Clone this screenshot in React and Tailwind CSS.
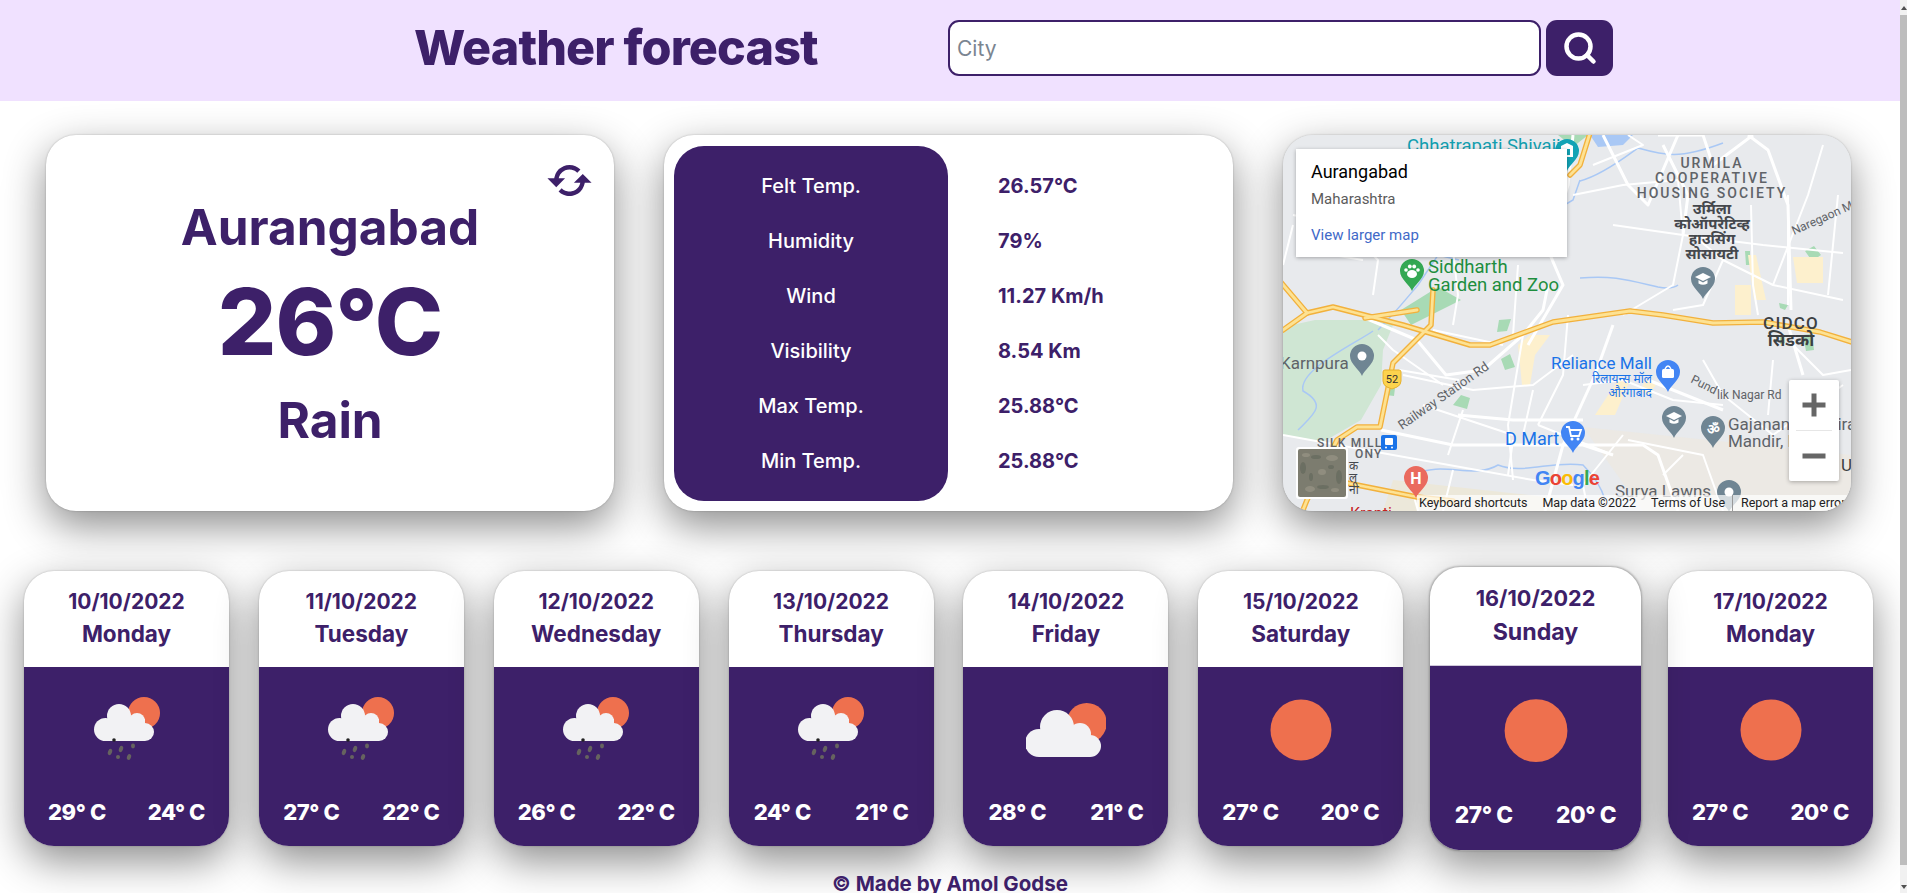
import React from "react";
import { Search } from "lucide-react";
import { BiRefresh } from "react-icons/bi";

const stats = [
  ["Felt Temp.", "26.57°C"],
  ["Humidity", "79%"],
  ["Wind", "11.27 Km/h"],
  ["Visibility", "8.54 Km"],
  ["Max Temp.", "25.88°C"],
  ["Min Temp.", "25.88°C"],
];

const days = [
  { date: "10/10/2022", day: "Monday", hi: 29, lo: 24, icon: "rain" },
  { date: "11/10/2022", day: "Tuesday", hi: 27, lo: 22, icon: "rain" },
  { date: "12/10/2022", day: "Wednesday", hi: 26, lo: 22, icon: "rain" },
  { date: "13/10/2022", day: "Thursday", hi: 24, lo: 21, icon: "rain" },
  { date: "14/10/2022", day: "Friday", hi: 28, lo: 21, icon: "cloud" },
  { date: "15/10/2022", day: "Saturday", hi: 27, lo: 20, icon: "sun" },
  { date: "16/10/2022", day: "Sunday", hi: 27, lo: 20, icon: "sun", big: true },
  { date: "17/10/2022", day: "Monday", hi: 27, lo: 20, icon: "sun" },
];

const WeatherIcon = ({ type }) => (
  <svg width="80" height="80" viewBox="0 0 80 80" className="block mx-auto">
    {type === "sun" && <circle cx="40" cy="41" r="30.5" fill="#ee704e" />}
    {type === "rain" && (
      <g>
        <circle cx="57" cy="24" r="16" fill="#ee704e" />
        <g fill="#f2f2f4">
          <circle cx="18.5" cy="40.5" r="11.5" />
          <circle cx="32" cy="27" r="12" />
          <circle cx="50" cy="32" r="8" />
          <circle cx="58" cy="43" r="9" />
          <rect x="18" y="30" width="40" height="22" />
        </g>
        <circle cx="27" cy="51" r="1.8" fill="#222" />
        <g fill="#66635f">
          <ellipse cx="23" cy="63" rx="2" ry="3.2" transform="rotate(20 23 63)" />
          <ellipse cx="34" cy="60" rx="2" ry="3.2" transform="rotate(20 34 60)" />
          <ellipse cx="46" cy="57" rx="2" ry="2.4" />
          <ellipse cx="31" cy="68" rx="2" ry="2" />
          <ellipse cx="42" cy="68" rx="2" ry="3" transform="rotate(20 42 68)" />
        </g>
      </g>
    )}
    {type === "cloud" && (
      <g>
        <circle cx="60.7" cy="34" r="20" fill="#ee704e" />
        <g fill="#f2f2f4">
          <circle cx="13" cy="54" r="14" />
          <circle cx="31" cy="38" r="17" />
          <circle cx="54" cy="45" r="11" />
          <circle cx="64" cy="57" r="11" />
          <rect x="13" y="44" width="51" height="24" />
        </g>
      </g>
    )}
  </svg>
);

const Pin = ({ x, y, color, children }) => (
  <g transform={`translate(${x} ${y})`}>
    <path d="M0 19C-2 13-12 7-12 -1a12 12 0 0 1 24 0C12 7 2 13 0 19Z" fill={color} />
    {children || <circle cx="0" cy="-1" r="4.5" fill="#fff" />}
  </g>
);

const Cap = () => (
  <g fill="#fff">
    <path d="M-8 -3L0 -7L8 -3L0 1Z" />
    <path d="M-4.5 0V3.5Q0 6 4.5 3.5V0L0 2.5Z" />
  </g>
);

const MapArt = () => (
  <svg viewBox="0 0 568 376" width="568" height="376" className="block" fontFamily="Roboto, sans-serif">
    <rect width="568" height="376" fill="#e8eaed" />
    {/* parks and built up patches */}
    <path d="M0 192L32 185L112 185L100 215L98 250L78 285L40 307L0 300Z" fill="#cfe6d3" />
    <path d="M118 175L155 152L178 165L128 190Z" fill="#a8dab5" />
    <path d="M300 292L568 320L568 376L360 376Z" fill="#ece9e1" opacity="0.8" />
    <path d="M110 345L290 365L300 376L100 376Z" fill="#ece8da" />
    <path d="M307 0L350 0L340 10L315 12Z" fill="#a9c8f5" />
    <path d="M275 0L305 0L290 12Z" fill="#a8dab5" />
    <path d="M170 270l8-10l9 3l-3 11zM218 224l9-5l5 13l-10 3zM216 185l12-1l-4 12l-10 1zM106 252l6 1l-1 8l-8-1z" fill="#a8dab5" />
    <path d="M520 200l9-1l2 16l-8 1zM497 200l4 0l1 8l-5 1zM462 116h5v14h-4zM522 116l9-5l7 9l-9 6zM496 168l9 2l-3 5l-5-2z" fill="#a8dab5" />
    <path d="M452 150h16v30h-16zM510 122h30v26h-26zM465 120l8 0l10 45l-12 0z" fill="#fdf0cd" />
    <path d="M235 210l12-10l20 0l-15 20l-5 30l-8 0zM335 245l12 0l-15 35l-20 0zM363 245l10 5l-8 10l-8-5z" fill="#fdf0cd" />
    {/* rivers */}
    <g fill="none" stroke="#a9c8f5" strokeWidth="1.5">
      <path d="M90 196C70 210 15 235 20 256C45 270 30 280 15 295" />
      <path d="M297 46C320 40 345 20 355 13C380 20 395 25 440 8M297 143C330 140 345 145 375 152C390 155 395 150 395 150" />
      <path d="M95 195C110 180 118 170 135 150L155 120L176 125" />
      <path d="M240 75L265 80L290 65L297 45M198 105L240 85" />
      <path d="M130 340C160 325 190 345 215 330C240 340 270 325 300 330C310 340 318 350 322 365" />
    </g>
    {/* minor roads */}
    <g fill="none" stroke="#fff" strokeWidth="2" strokeLinejoin="round">
      <path d="M310 30L360 10L345 0M330 90L400 100L480 110L560 118M290 60L340 50L395 45M395 45L400 100L390 150L340 180" />
      <path d="M410 100L440 125L490 150L560 165M468 70L470 150L475 180M440 125L420 170L390 175" />
      <path d="M540 10L525 60L490 150M505 60L505 170M555 60L545 160" />
      <path d="M10 80L60 90L95 125L90 160M60 90L50 120L80 125M170 115L175 160L170 190M235 130L230 200" />
      <path d="M150 195L220 210M120 240L190 255L250 250L290 220M140 270L230 300M180 275L165 320M230 305L225 340" />
      <path d="M250 255L240 300M240 200L225 290L230 345M285 180L280 240L255 290M255 290L330 320" />
      <path d="M0 300L110 320L250 345L290 350M125 340L135 376M170 335L160 376" />
      <path d="M420 225L440 260L490 300L560 250M490 225L485 280M505 205L540 240L568 235M340 300L300 350L305 376" />
      <path d="M345 305L420 320L440 376M400 320L380 340" />
      <path d="M95 200L110 215L160 250M116 235L176 245" />
      <path d="M300 250L340 245L390 265L440 270M0 130L10 90" />
    </g>
    {/* white main roads */}
    <g fill="none" stroke="#fff" strokeWidth="3" strokeLinejoin="round">
      <path d="M130 112L150 90L180 65L175 55M290 0L285 50L265 115L280 150L245 210M320 0L345 50L365 70L395 0" />
      <path d="M375 0L420 0L430 30L470 0M400 100L405 60L380 10M465 0L485 15L505 70L508 175" />
      <path d="M82 183L134 205L163 240L200 235L240 200L260 175L265 150" />
      <path d="M175 280L230 285L300 285" />
      <path d="M262 376L280 310L312 240L330 190" />
      <path d="M98 295L170 310L300 310L360 310L375 320L395 376M300 310L330 320" />
      <path d="M365 245L440 275" />
      <path d="M505 190L520 240" />
    </g>
    {/* highways */}
    <g fill="none" strokeLinejoin="round" strokeLinecap="round">
      <g stroke="#f2b13c" strokeWidth="5.5">
        <path d="M-4 145L24 178L50 172L120 190L187 210L207 210L270 187L347 176L380 180L430 188L480 187L537 197L572 208" />
        <path d="M150 155L148 190L110 228L104 258L97 292L74 292L54 305L24 365L18 380" />
        <path d="M24 178L0 195M134 175L82 183" />
        <path d="M64 348L134 362L170 366M307 -2L297 30L287 40" />
      </g>
      <g stroke="#fde293" strokeWidth="2.8">
        <path d="M-4 145L24 178L50 172L120 190L187 210L207 210L270 187L347 176L380 180L430 188L480 187L537 197L572 208" />
        <path d="M150 155L148 190L110 228L104 258L97 292L74 292L54 305L24 365L18 380" />
        <path d="M24 178L0 195M134 175L82 183" />
        <path d="M64 348L134 362L170 366M307 -2L297 30L287 40" />
      </g>
    </g>

    {/* labels */}
    <text x="124" y="17" fontSize="18.5" fill="#129eaf">Chhatrapati Shivaji</text>
    <Pin x={284} y={17} color="#12a3b5"><path d="M-6 -6L0 -9L6 -6V5H-6Z" fill="#fff" /><rect x="-3" y="-3" width="6" height="6" fill="#12a3b5" /></Pin>

    <text fontSize="18.5" fill="#1e8e3e">
      <tspan x="145" y="138">Siddharth</tspan>
      <tspan x="145" y="156">Garden and Zoo</tspan>
    </text>
    <Pin x={129} y={137} color="#34a853">
      <g fill="#fff">
        <ellipse cx="0" cy="2" rx="5" ry="4" />
        <circle cx="-6" cy="-2" r="1.8" />
        <circle cx="-2.2" cy="-5.5" r="1.9" />
        <circle cx="2.2" cy="-5.5" r="1.9" />
        <circle cx="6" cy="-2" r="1.8" />
      </g>
    </Pin>

    <g textAnchor="middle" fill="#5f6368" fontSize="14" fontWeight="500" letterSpacing="2">
      <text x="429" y="33">URMILA</text>
      <text x="429" y="48">COOPERATIVE</text>
      <text x="429" y="63">HOUSING SOCIETY</text>
    </g>
    <g textAnchor="middle" fill="#45484d" fontSize="15" fontWeight="700" fontFamily="'Noto Sans', 'Noto Sans Devanagari', sans-serif">
      <text x="429" y="79">उर्मिला</text>
      <text x="429" y="94">कोऑपरेटिव्ह</text>
      <text x="429" y="109">हाउसिंग</text>
      <text x="429" y="124">सोसायटी</text>
    </g>
    <Pin x={420} y={145} color="#6f8593"><Cap /></Pin>
    <text transform="translate(511 100) rotate(-24)" fontSize="12" fill="#5f6368">Naregaon M</text>

    <text x="508" y="194" textAnchor="middle" fontSize="17" fontWeight="500" letterSpacing="1.2" fill="#3c4043">CIDCO</text>
    <text x="508" y="211" textAnchor="middle" fontSize="17" fontWeight="700" fill="#3c4043" fontFamily="'Noto Sans', sans-serif">सिडको</text>

    <text x="-3" y="234" fontSize="17" fill="#5f6368">Karnpura</text>
    <Pin x={79} y={222} color="#6f8593" />
    <g>
      <path d="M102 235h14q2 0 2 2v9q0 4-4 6l-5 2l-5-2q-4-2-4-6v-9q0-2 2-2Z" fill="#fcd34d" stroke="#e6b12e" strokeWidth="1" />
      <text x="109" y="248" textAnchor="middle" fontSize="11" fill="#333">52</text>
    </g>
    <text transform="translate(119 295) rotate(-35)" fontSize="13" fill="#5f6368">Railway Station Rd</text>

    <text x="34" y="312" fontSize="12" fontWeight="500" letterSpacing="1.2" fill="#5f6368">SILK MILL</text>
    <text x="72" y="323" fontSize="12" fontWeight="500" letterSpacing="1.2" fill="#5f6368">ONY</text>
    <g fontSize="12" fill="#45484d" fontFamily="'Noto Sans', sans-serif">
      <text x="66" y="335">क</text>
      <text x="66" y="347">ल</text>
      <text x="66" y="359">नी</text>
    </g>
    <g>
      <rect x="98" y="300" width="16" height="15" rx="2" fill="#1a73e8" />
      <rect x="102" y="303" width="8" height="7" rx="1" fill="#fff" />
      <circle cx="103" cy="312.5" r="1" fill="#fff" />
      <circle cx="109" cy="312.5" r="1" fill="#fff" />
    </g>

    <text x="222" y="310" fontSize="18" fill="#1a73e8">D Mart</text>
    <Pin x={290} y={299} color="#4285f4">
      <path d="M-7 -7H-4L-2 2H6L8 -4H-3" fill="none" stroke="#fff" strokeWidth="1.8" />
      <circle cx="-1" cy="5" r="1.5" fill="#fff" />
      <circle cx="5" cy="5" r="1.5" fill="#fff" />
    </Pin>

    <text x="369" y="234" textAnchor="end" fontSize="17" fill="#1a73e8">Reliance Mall</text>
    <g textAnchor="end" fontSize="12" fill="#1a73e8" fontFamily="'Noto Sans', sans-serif">
      <text x="369" y="248">रिलायन्स मॉल</text>
      <text x="369" y="262">औरंगाबाद</text>
    </g>
    <Pin x={385} y={238} color="#4285f4">
      <rect x="-6" y="-4" width="12" height="9" rx="1.5" fill="#fff" />
      <path d="M-3 -4Q0 -10 3 -4" fill="none" stroke="#fff" strokeWidth="1.4" />
    </Pin>

    <text transform="translate(407 247) rotate(27)" fontSize="12" fill="#5f6368">Pund</text>
    <text x="434" y="264" fontSize="12" fill="#5f6368">lik Nagar Rd</text>
    <Pin x={391} y={284} color="#6f8593"><Cap /></Pin>
    <Pin x={430} y={294} color="#6f8593">
      <text x="0" y="5" textAnchor="middle" fontSize="14" fontWeight="700" fill="#fff" fontFamily="'DejaVu Sans', sans-serif">ॐ</text>
    </Pin>
    <text fontSize="17" fill="#5f6368">
      <tspan x="445" y="295">Gajanan Mandira</tspan>
      <tspan x="445" y="312">Mandir, Nagar</tspan>
    </text>
    <text x="558" y="336" fontSize="17" fill="#3c4043">U</text>

    <text x="332" y="362" fontSize="17" fill="#5f6368">Surya Lawns</text>
    <Pin x={446} y={358} color="#6f8593" />
    <Pin x={133} y={344} color="#ea6a5e">
      <text x="0" y="5" textAnchor="middle" fontSize="16" fontWeight="700" fill="#fff">H</text>
    </Pin>
    <text x="67" y="384" fontSize="16" fill="#c5221f">Kranti</text>

    <text x="252" y="350" fontSize="20" fontWeight="700" fontFamily="'Liberation Sans', sans-serif" letterSpacing="-0.8">
      <tspan fill="#4285f4">G</tspan>
      <tspan fill="#ea4335">o</tspan>
      <tspan fill="#fbbc05">o</tspan>
      <tspan fill="#4285f4">g</tspan>
      <tspan fill="#34a853">l</tspan>
      <tspan fill="#ea4335">e</tspan>
    </text>

    {/* satellite thumbnail */}
    <rect x="13" y="312" width="52" height="52" rx="3" fill="#fff" />
    <rect x="15" y="314" width="48" height="48" rx="2" fill="#7d7c6f" />
    <g fill="#5f6459" opacity="0.55">
      <ellipse cx="20" cy="333" rx="3" ry="6" />
      <ellipse cx="33" cy="322" rx="5" ry="2" />
      <ellipse cx="56" cy="342" rx="3" ry="7" />
      <ellipse cx="40" cy="352" rx="6" ry="2" />
      <ellipse cx="28" cy="342" rx="2" ry="4" />
      <ellipse cx="48" cy="332" rx="3" ry="2" />
    </g>
    <g fill="#a09c8c" opacity="0.55">
      <ellipse cx="49" cy="323" rx="6" ry="3" />
      <ellipse cx="27" cy="354" rx="5" ry="3" />
      <ellipse cx="39" cy="337" rx="4" ry="3" />
      <ellipse cx="23" cy="320" rx="4" ry="2" />
      <ellipse cx="52" cy="355" rx="4" ry="2" />
    </g>
  </svg>
);

const MapPanel = () => (
  <div className="relative w-[568px] h-[376px] rounded-[30px] overflow-hidden bg-[#e8eaed] shadow-[0_15px_42px_rgba(0,0,0,0.45),0_0_2px_rgba(0,0,0,0.25)]">
    <MapArt />
    <div className="absolute left-[13px] top-[14px] w-[271px] h-[108px] bg-white shadow-[0_1px_4px_rgba(0,0,0,0.3)] pl-[15px] pt-[12px] [font-family:Roboto,sans-serif]">
      <div className="text-[18px] leading-[22px] text-black">Aurangabad</div>
      <div className="mt-[6px] text-[15px] leading-[20px] text-[#5b5b5b]">Maharashtra</div>
      <div className="mt-[16px] text-[15px] leading-[20px] text-[#4169c8]">View larger map</div>
    </div>
    <div className="absolute left-[506px] top-[245px] w-[50px] h-[101px] bg-white rounded-[2px] shadow-[0_1px_4px_rgba(0,0,0,0.3)] flex flex-col items-center">
      <div className="h-[50px] w-full flex items-center justify-center">
        <svg width="24" height="24" viewBox="0 0 24 24"><path d="M0.5 12H23.5M12 0.5V23.5" stroke="#666" strokeWidth="5" /></svg>
      </div>
      <div className="w-[36px] h-px bg-[#e6e6e6]" />
      <div className="h-[50px] w-full flex items-center justify-center">
        <svg width="24" height="24" viewBox="0 0 24 24"><path d="M0.5 12H23.5" stroke="#666" strokeWidth="5" /></svg>
      </div>
    </div>
    <div className="absolute right-0 bottom-0 left-[134px] h-[16px] bg-white/70 flex items-center pl-[2px] text-[12.5px] leading-[16px] text-[#222] whitespace-nowrap [font-family:Roboto,sans-serif]">
      <span>Keyboard shortcuts</span>
      <span className="ml-[15px]">Map data ©2022</span>
      <span className="ml-[15px]">Terms of Use</span>
      <span className="ml-[7px] pl-[8px] border-l border-[#999]">Report a map error</span>
    </div>
  </div>
);

const DayCard = ({ d }) => (
  <div className={`w-[205px] h-[275px] shrink-0 rounded-[30px] overflow-hidden bg-white shadow-[0_15px_42px_rgba(0,0,0,0.45),0_0_2px_rgba(0,0,0,0.25)] ${d.big ? "relative scale-[1.03]" : ""}`}>
    <div className="h-[96px] pt-[15px] text-center leading-[32px] font-bold text-[#3d2069]">
      <div className="text-[21px]">{d.date}</div>
      <div className="text-[22.5px]">{d.day}</div>
    </div>
    <div className="h-[179px] bg-[#3d2069] pt-[22px]">
      <WeatherIcon type={d.icon} />
      <div className="mt-[28px] px-[3px] flex justify-around text-[22px] leading-[30px] font-extrabold tracking-[-0.4px] text-white">
        <span>{d.hi}° C</span>
        <span>{d.lo}° C</span>
      </div>
    </div>
  </div>
);

export default function App() {
  return (
    <div className="flex h-screen overflow-hidden bg-white [font-family:Inter,sans-serif]">
      <div className="flex-1 min-w-0 flex flex-col">
        <header className="relative z-10 h-[101px] shrink-0 bg-[#f0e1ff] flex items-center pl-[414px] pb-[5px]">
          <h1 className="w-[534px] text-[48.5px] font-extrabold text-[#3d2069] tracking-[-0.9px]">Weather forecast</h1>
          <input
            placeholder="City"
            className="w-[593px] h-[56px] rounded-[11px] border-2 border-[#3d2069] bg-white px-[7px] text-[21px] placeholder:text-[#7b8591] outline-none"
          />
          <button className="ml-[5px] w-[67px] h-[56px] rounded-[11px] bg-[#3d2069] flex items-center justify-center">
            <Search size={36} strokeWidth={3} color="#fff" />
          </button>
        </header>

        <section className="shrink-0 flex pt-[34px] pl-[46px] gap-[50px]">
          <div className="relative w-[568px] h-[376px] rounded-[30px] bg-white shadow-[0_15px_42px_rgba(0,0,0,0.45),0_0_2px_rgba(0,0,0,0.25)] flex flex-col items-center text-[#3d2069]">
            <BiRefresh className="absolute right-[18px] top-[19px]" size={53} />
            <div className="mt-[63px] text-[49.5px] leading-[58px] font-bold">Aurangabad</div>
            <div className="mt-[13px] text-[92px] leading-[106px] font-extrabold tracking-[-1px]">26°C</div>
            <div className="mt-[16px] text-[49.5px] leading-[58px] font-bold">Rain</div>
          </div>

          <div className="w-[569px] h-[376px] rounded-[30px] bg-white shadow-[0_15px_42px_rgba(0,0,0,0.45),0_0_2px_rgba(0,0,0,0.25)] pl-[10px] pt-[11px] flex">
            <div className="w-[274px] h-[355px] rounded-[30px] bg-[#3d2069] pt-[12px] flex flex-col text-white">
              {stats.map(([label]) => (
                <div key={label} className="h-[55px] flex items-center justify-center text-[20px] font-medium">{label}</div>
              ))}
            </div>
            <div className="pl-[50px] pt-[12px] flex flex-col text-[#3d2069]">
              {stats.map(([label, value]) => (
                <div key={label} className="h-[55px] flex items-center text-[20px] font-bold">{value}</div>
              ))}
            </div>
          </div>

          <MapPanel />
        </section>

        <section className="shrink-0 mt-[60px] pl-[24px] flex gap-[29.86px]">
          {days.map(d => <DayCard key={d.date} d={d} />)}
        </section>

        <footer className="shrink-0 mt-[24px] text-center text-[20.5px] leading-[28px] font-bold text-[#3d2069]">© Made by Amol Godse</footer>
      </div>

      {/* page scrollbar */}
      <div className="w-[7px] shrink-0 flex flex-col bg-[#f1f1f1]">
        <div className="h-[15px] flex items-center justify-center">
          <div className="border-x-[3px] border-x-transparent border-b-[4px] border-b-[#505050]" />
        </div>
        <div className="flex-1 bg-[#bdbdbd]" />
        <div className="h-[28px] flex items-end justify-center pb-[4px]">
          <div className="border-x-[3px] border-x-transparent border-t-[4px] border-t-[#505050]" />
        </div>
      </div>
    </div>
  );
}
